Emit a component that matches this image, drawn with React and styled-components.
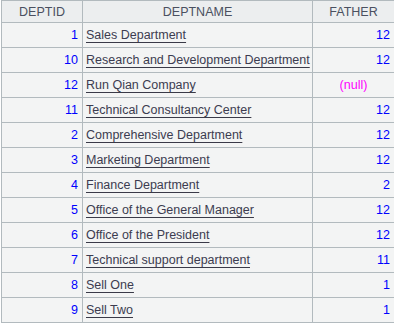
import React from "react";
import styled, { createGlobalStyle } from "styled-components";

const Global = createGlobalStyle`
  html, body { margin: 0; padding: 0; background: #ffffff; }
  body { font-family: "Liberation Sans", Arial, sans-serif; }
`;

const Table = styled.table`
  border-collapse: collapse;
  table-layout: fixed;
  width: 393px;
  margin: 0 0 0 1px;
  font-family: "Liberation Sans", Arial, sans-serif;
  font-size: 12.5px;
`;

const Th = styled.th`
  height: 21px;
  padding: 0;
  border: 1px solid #b2babe;
  background: #eceeef;
  color: #4a5060;
  font-weight: normal;
  text-align: center;
  vertical-align: middle;
`;

const Td = styled.td`
  height: 24px;
  padding: 0 ${(p) => (p.$align === "right" ? "4px" : "3px")} 0 3px;
  border: 1px solid #b2babe;
  background: #f3f4f4;
  text-align: ${(p) => p.$align || "left"};
  color: ${(p) => p.$color || "#3c3c50"};
  vertical-align: middle;
  white-space: nowrap;
  overflow: hidden;
`;

const Link = styled.span`
  color: #3c3c50;
  text-decoration: underline;
  text-decoration-color: #3a3a48;
  text-underline-offset: 3px;
  text-decoration-thickness: 1px;
`;

const rows = [
  [1, "Sales Department", 12],
  [10, "Research and Development Department", 12],
  [12, "Run Qian Company", null],
  [11, "Technical Consultancy Center", 12],
  [2, "Comprehensive Department", 12],
  [3, "Marketing Department", 12],
  [4, "Finance Department", 2],
  [5, "Office of the General Manager", 12],
  [6, "Office of the President", 12],
  [7, "Technical support department", 11],
  [8, "Sell One", 1],
  [9, "Sell Two", 1],
];

export default function App() {
  return (
    <>
      <Global />
      <Table>
        <colgroup>
          <col style={{ width: 81 }} />
          <col style={{ width: 230 }} />
          <col style={{ width: 82 }} />
        </colgroup>
        <thead>
          <tr>
            <Th>DEPTID</Th>
            <Th>DEPTNAME</Th>
            <Th>FATHER</Th>
          </tr>
        </thead>
        <tbody>
          {rows.map(([id, name, father]) => (
            <tr key={id}>
              <Td $align="right" $color="#0000ff">{id}</Td>
              <Td>
                <Link>{name}</Link>
              </Td>
              {father === null ? (
                <Td $align="center" $color="#ff00ff">(null)</Td>
              ) : (
                <Td $align="right" $color="#0000ff">{father}</Td>
              )}
            </tr>
          ))}
        </tbody>
      </Table>
    </>
  );
}
